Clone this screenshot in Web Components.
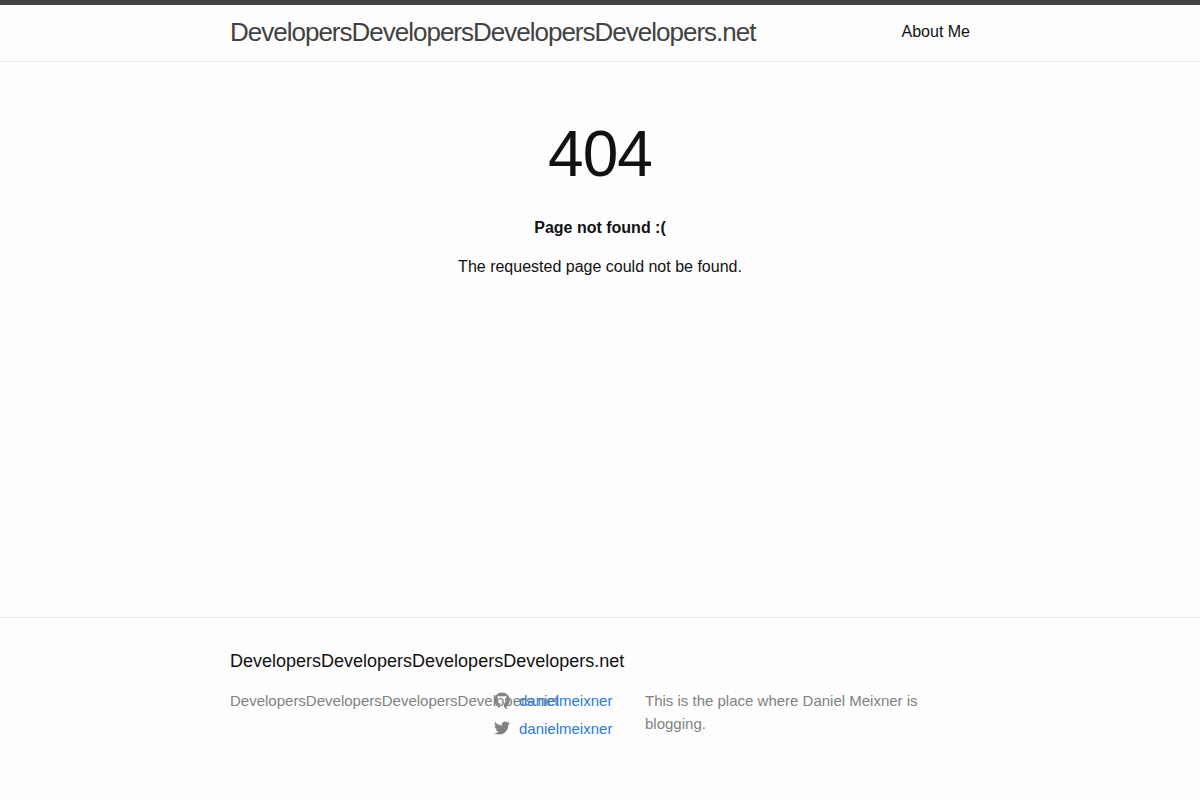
<!DOCTYPE html>
<html lang="en">
<head>
<meta charset="utf-8">
<meta name="viewport" content="width=device-width, initial-scale=1">
<title>DevelopersDevelopersDevelopersDevelopers.net</title>
<style>
html, body { margin: 0; padding: 0; }
body { background: #fdfdfd; color: #111; font: 400 16px/24px "Liberation Sans", Arial, sans-serif; }
</style>
</head>
<body>
<blog-page>
  <site-header slot="header" site-title="DevelopersDevelopersDevelopersDevelopers.net"><a href="/about/">About Me</a></site-header>
  <error-message code="404">
    <strong slot="summary">Page not found :(</strong>
    The requested page could not be found.
  </error-message>
  <site-footer slot="footer" site-title="DevelopersDevelopersDevelopersDevelopers.net">
    <social-link slot="social" network="github" user="danielmeixner"></social-link>
    <social-link slot="social" network="twitter" user="danielmeixner"></social-link>
    This is the place where Daniel Meixner is blogging.
  </site-footer>
</blog-page>
<script>
class BaseElement extends HTMLElement {
  constructor() {
    super();
    this.attachShadow({ mode: "open" });
  }
  connectedCallback() {
    this.shadowRoot.innerHTML = this.render();
  }
}

customElements.define("blog-page", class extends BaseElement {
  render() {
    return `<style>
      :host { display: flex; flex-direction: column; min-height: 100vh; }
      main { flex: 1; }
    </style>
    <slot name="header"></slot><main><slot></slot></main><slot name="footer"></slot>`;
  }
});

customElements.define("site-header", class extends BaseElement {
  render() {
    return `<style>
      :host { display: block; border-top: 5px solid #424242; border-bottom: 1px solid #e8e8e8; }
      header { display: flex; justify-content: space-between; max-width: 740px; margin: 0 auto; padding: 0 30px; line-height: 54px; min-height: 56px; }
      .title { color: #424242; font-size: 26px; font-weight: 300; letter-spacing: -1px; text-decoration: none; }
      ::slotted(a) { color: #111; text-decoration: none; }
    </style>
    <header><a class="title" href="/">${this.getAttribute("site-title")}</a><nav><slot></slot></nav></header>`;
  }
});

customElements.define("error-message", class extends BaseElement {
  render() {
    return `<style>
      :host { display: block; max-width: 600px; margin: 0 auto; padding: 60px 20px 0; text-align: center; }
      h1 { margin: 0 0 30px; font-size: 64px; line-height: 64px; font-weight: 400; letter-spacing: -1px; }
      p { margin: 0 0 15px; }
    </style>
    <h1>${this.getAttribute("code")}</h1>
    <p><slot name="summary"></slot></p>
    <p><slot></slot></p>`;
  }
});

customElements.define("site-footer", class extends BaseElement {
  render() {
    return `<style>
      :host { display: block; border-top: 1px solid #e8e8e8; color: #828282; font-size: 15px; line-height: 23px; }
      footer { max-width: 740px; margin: 0 auto; padding: 30px 30px 50px; }
      h2 { margin: 0 0 15px; color: #111; font-size: 18px; line-height: 26px; font-weight: 400; }
      .columns { display: grid; grid-template-columns: 35fr 20fr 45fr; }
      .columns > * { min-width: 0; }
      .social { display: grid; align-content: start; gap: 5px; padding-left: 5px; }
      p { margin: 0 0 15px; padding-left: 8px; }
    </style>
    <footer><h2>${this.getAttribute("site-title")}</h2>
      <div class="columns">
        <div>${this.getAttribute("site-title")}</div>
        <div class="social"><slot name="social"></slot></div>
        <p><slot></slot></p>
      </div>
    </footer>`;
  }
});

const icons = {
  github: "M7.999,0.431c-4.285,0-7.76,3.474-7.76,7.761c0,3.428,2.223,6.337,5.307,7.363c0.388,0.071,0.53-0.168,0.53-0.374c0-0.184-0.007-0.672-0.01-1.32c-2.159,0.469-2.614-1.04-2.614-1.04c-0.353-0.896-0.862-1.135-0.862-1.135c-0.705-0.481,0.053-0.472,0.053-0.472c0.779,0.055,1.189,0.8,1.189,0.8c0.692,1.186,1.816,0.843,2.258,0.645c0.071-0.502,0.271-0.843,0.493-1.037C4.86,11.425,3.049,10.76,3.049,7.786c0-0.847,0.302-1.54,0.799-2.082C3.768,5.507,3.501,4.718,3.924,3.65c0,0,0.652-0.209,2.134,0.796C6.677,4.273,7.34,4.187,8,4.184c0.659,0.003,1.323,0.089,1.943,0.261c1.482-1.004,2.132-0.796,2.132-0.796c0.423,1.068,0.157,1.857,0.077,2.054c0.497,0.542,0.798,1.235,0.798,2.082c0,2.981-1.814,3.637-3.543,3.829c0.279,0.24,0.527,0.713,0.527,1.437c0,1.037-0.01,1.874-0.01,2.129c0,0.208,0.14,0.449,0.534,0.373c3.081-1.028,5.302-3.935,5.302-7.362C15.76,3.906,12.285,0.431,7.999,0.431z",
  twitter: "M15.969,3.058c-0.586,0.26-1.217,0.436-1.878,0.515c0.675-0.405,1.194-1.045,1.438-1.809c-0.632,0.375-1.332,0.647-2.076,0.793c-0.596-0.636-1.446-1.033-2.387-1.033c-1.806,0-3.27,1.464-3.27,3.27c0,0.256,0.029,0.506,0.085,0.745C5.163,5.404,2.753,4.102,1.14,2.124C0.859,2.607,0.698,3.168,0.698,3.767c0,1.134,0.577,2.135,1.455,2.722C1.616,6.472,1.112,6.325,0.671,6.08c0,0.014,0,0.027,0,0.041c0,1.584,1.127,2.906,2.623,3.206C3.02,9.402,2.731,9.442,2.433,9.442c-0.211,0-0.416-0.021-0.615-0.059c0.416,1.299,1.624,2.245,3.055,2.271c-1.119,0.877-2.529,1.4-4.061,1.4c-0.264,0-0.524-0.015-0.78-0.046c1.447,0.928,3.166,1.469,5.013,1.469c6.015,0,9.304-4.983,9.304-9.304c0-0.142-0.003-0.283-0.009-0.423C14.976,4.29,15.531,3.714,15.969,3.058z"
};

customElements.define("social-link", class extends BaseElement {
  render() {
    const network = this.getAttribute("network");
    return `<style>
      :host { display: block; }
      a { display: flex; align-items: flex-start; gap: 9px; color: #2a7ae2; text-decoration: none; }
      svg { flex: none; width: 16px; height: 16px; margin-top: 3px; fill: #828282; }
    </style>
    <a href="https://${network}.com/${this.getAttribute("user")}"><svg viewBox="0 0 16 16" aria-hidden="true"><path d="${icons[network]}"/></svg><span>${this.getAttribute("user")}</span></a>`;
  }
});
</script>
</body>
</html>
